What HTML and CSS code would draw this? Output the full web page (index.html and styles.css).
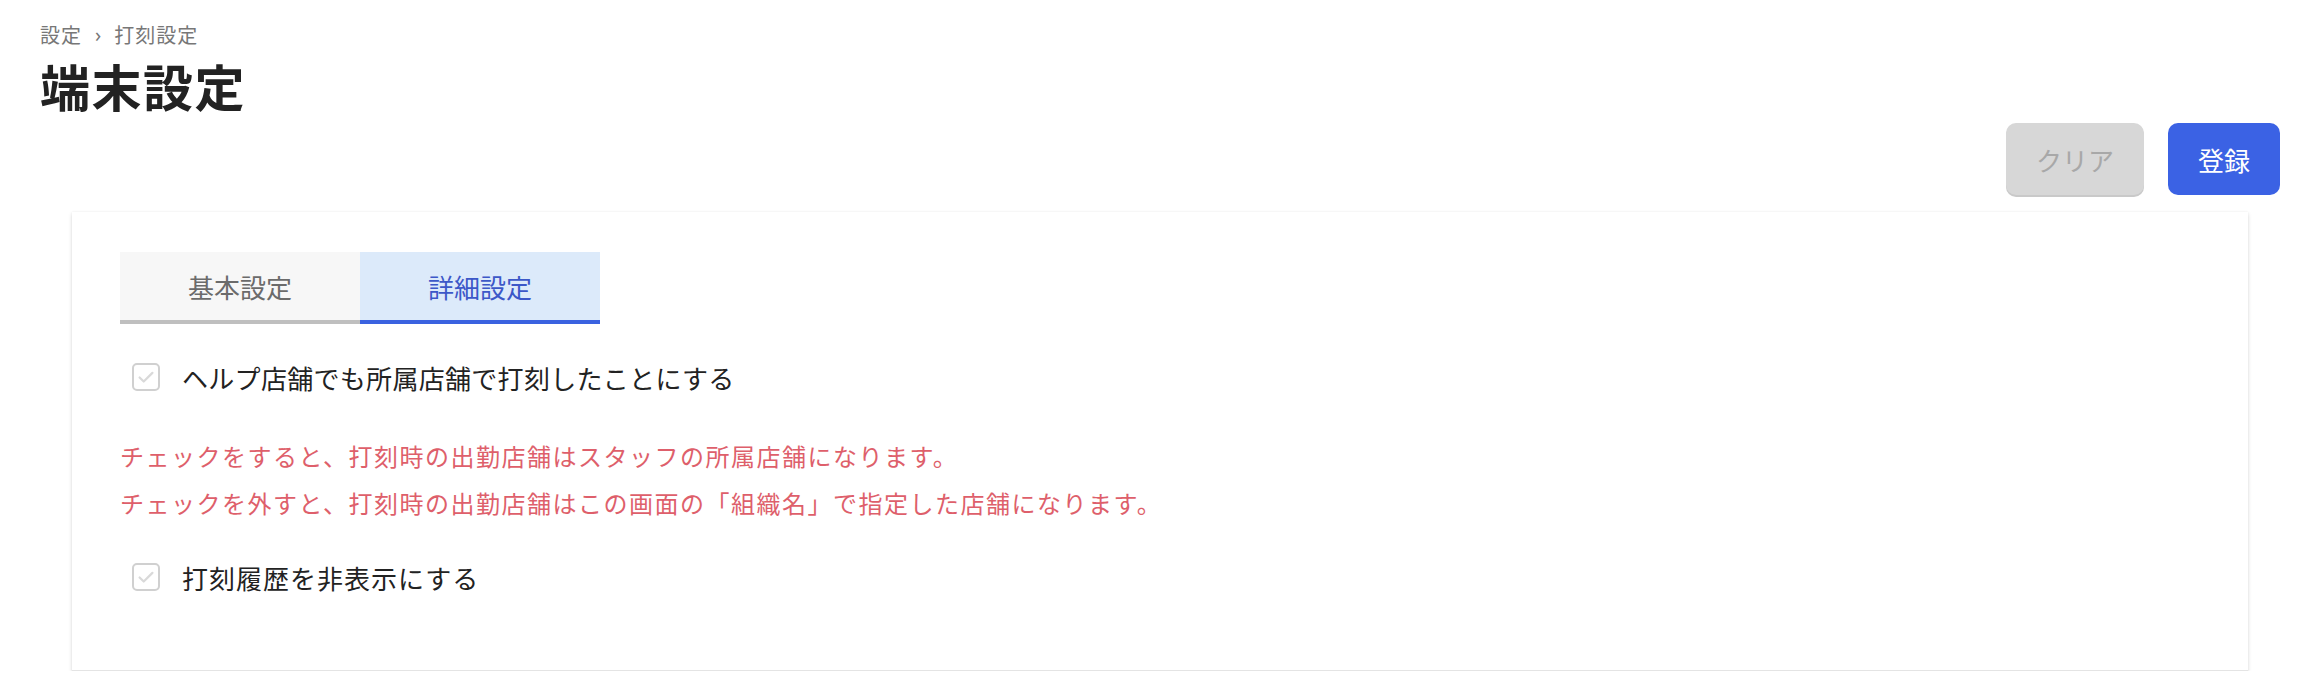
FILE: index.html
```html
<!DOCTYPE html>
<html lang="ja">
<head>
    <meta charset="UTF-8">
    <meta name="viewport" content="width=device-width, initial-scale=1.0">
    <title>端末設定</title>
    <link rel="stylesheet" href="styles.css">
</head>
<body>
    <div class="page-header">
        <nav class="breadcrumb">
            <span>設定</span>
            <span class="breadcrumb-sep">›</span>
            <span>打刻設定</span>
        </nav>
        <h1 class="page-title">端末設定</h1>
        <div class="actions">
            <button class="btn btn-clear" disabled>クリア</button>
            <button class="btn btn-primary">登録</button>
        </div>
    </div>

    <div class="card">
        <div class="tabs">
            <div class="tab">基本設定</div>
            <div class="tab tab-active">詳細設定</div>
        </div>

        <label class="check-row check-first">
            <span class="checkbox">
                <svg viewBox="0 0 24 24" width="22" height="22"><path d="M5 12.5l4.5 4.5L19 7.5" fill="none" stroke="#d9d9d9" stroke-width="2.4" stroke-linecap="round" stroke-linejoin="round"/></svg>
            </span>
            <span class="check-label">ヘルプ店舗でも所属店舗で打刻したことにする</span>
        </label>

        <div class="note">
            <p>チェックをすると、打刻時の出勤店舗はスタッフの所属店舗になります。</p>
            <p>チェックを外すと、打刻時の出勤店舗はこの画面の「組織名」で指定した店舗になります。</p>
        </div>

        <label class="check-row">
            <span class="checkbox">
                <svg viewBox="0 0 24 24" width="22" height="22"><path d="M5 12.5l4.5 4.5L19 7.5" fill="none" stroke="#d9d9d9" stroke-width="2.4" stroke-linecap="round" stroke-linejoin="round"/></svg>
            </span>
            <span class="check-label check-label-wide">打刻履歴を非表示にする</span>
        </label>
    </div>
</body>
</html>
```

FILE: styles.css
```css
body {
    margin: 0;
    background-color: #fff;
    color: #222;
    font-family: "Noto Sans CJK JP", "Noto Sans", sans-serif;
}

.page-header {
    padding: 23px 28px 0 40px;
}

.breadcrumb {
    display: flex;
    align-items: center;
    font-size: 20px;
    line-height: 24px;
    letter-spacing: 1px;
    color: #777;
}

.breadcrumb-sep {
    margin: 0 12px 0 13px;
    font-family: "Noto Sans", sans-serif;
}

.page-title {
    margin: 8px 0 0;
    font-size: 50px;
    line-height: 60px;
    font-weight: 700;
    letter-spacing: 1.5px;
    color: #222;
}

.actions {
    display: flex;
    justify-content: flex-end;
    gap: 24px;
    margin-top: 8px;
}

.btn {
    height: 72px;
    padding: 0 30px;
    border: none;
    border-radius: 10px;
    font-family: inherit;
    font-size: 26px;
    cursor: pointer;
}

.btn-clear {
    background-color: #d7d7d7;
    color: #a8a8a8;
    box-shadow: 0 2px 0 #c9c9c9;
    cursor: default;
}

.btn-primary {
    background-color: #3b62e4;
    color: #fff;
}

.card {
    margin: 17px 60px 0 72px;
    padding: 40px 48px 75px;
    background-color: #fff;
    border-bottom: 1px solid #e4e4e4;
    box-shadow: 0 0 2px rgba(0, 0, 0, 0.06), 0 2px 4px rgba(0, 0, 0, 0.14);
}

.tabs {
    display: flex;
}

.tab {
    width: 240px;
    height: 68px;
    display: flex;
    align-items: center;
    justify-content: center;
    background-color: #f7f7f7;
    border-bottom: 4px solid #bfbfbf;
    font-size: 26px;
    color: #6b6b6b;
}

.tab-active {
    background-color: #dceafa;
    border-bottom-color: #3a62e0;
    color: #3c58c8;
}

.check-row {
    display: flex;
    align-items: center;
    gap: 22px;
    height: 36px;
    margin-left: 12px;
    margin-top: 33px;
    font-size: 26px;
    letter-spacing: 0.3px;
    color: #222;
}

.check-label-wide {
    letter-spacing: 1px;
}

.check-first {
    margin-top: 35px;
}

.checkbox {
    width: 24px;
    height: 24px;
    border: 2px solid #d0d0d0;
    border-radius: 5px;
    display: flex;
    align-items: center;
    justify-content: center;
}

.note {
    margin-top: 37px;
    color: #de5f6b;
    font-size: 24px;
    letter-spacing: 1.5px;
}

.note p {
    margin: 0;
    line-height: 47px;
}
```
